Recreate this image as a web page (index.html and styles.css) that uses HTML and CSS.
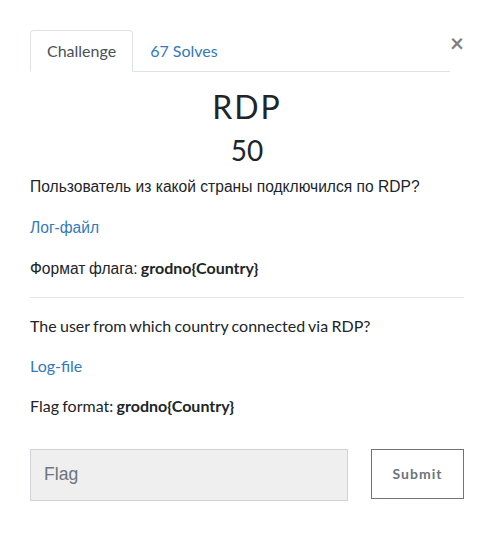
FILE: index.html
```html
<!DOCTYPE html>
<html lang="ru">
<head>
<meta charset="utf-8">
<title>RDP</title>
<link rel="stylesheet" href="styles.css">
</head>
<body>
<div class="modal">
  <div class="header">
    <ul class="nav">
      <li class="tab active">Challenge</li>
      <li class="tab">67 Solves</li>
    </ul>
    <span class="close">×</span>
  </div>
  <h2 class="name">RDP</h2>
  <h3 class="value">50</h3>
  <div class="desc">
    <p class="ru">Пользователь из какой страны подключился по RDP?</p>
    <p><a class="link ru" href="#">Лог-файл</a></p>
    <p><span class="ru">Формат флага:</span> <strong>grodno{Country}</strong></p>
    <hr class="rule">
    <p>The user from which country connected via RDP?</p>
    <p><a class="link" href="#">Log-file</a></p>
    <p>Flag format: <strong>grodno{Country}</strong></p>
  </div>
  <form class="submit-row">
    <input class="flag" type="text" placeholder="Flag">
    <button class="submit" type="button">Submit</button>
  </form>
</div>
</body>
</html>
```
FILE: styles.css
```css
html, body {
  margin: 0;
  padding: 0;
  background: #fff;
}
body {
  font-family: Lato, "Liberation Sans", sans-serif;
  font-size: 16px;
  line-height: 1.5;
  color: #212529;
}
.modal {
  padding: 30px 32px 0 30px;
}
.header {
  display: flex;
  align-items: flex-start;
}
.nav {
  flex: 1;
  display: flex;
  list-style: none;
  margin: 0;
  padding: 0;
  border-bottom: 1px solid #dee2e6;
}
.tab {
  padding: 8px 16px;
  border: 1px solid transparent;
  border-top-left-radius: 4px;
  border-top-right-radius: 4px;
  margin-bottom: -1px;
  color: #337ab7;
  line-height: 24px;
}
.tab.active {
  color: #495057;
  border-color: #dee2e6 #dee2e6 #fff;
  background: #fff;
}
.close {
  width: 14px;
  font-size: 24px;
  font-weight: 700;
  line-height: 1;
  color: #000;
  opacity: 0.5;
  text-align: right;
  margin-top: 1px;
}
.name {
  margin: 16px 0 8px;
  text-align: center;
  font-size: 32px;
  font-weight: 400;
  line-height: 1.2;
  letter-spacing: 2px;
}
.value {
  margin: 0 0 7px;
  text-align: center;
  font-size: 28px;
  font-weight: 400;
  line-height: 1.2;
}
.desc p {
  margin: 0 0 16px;
  line-height: 24px;
  word-spacing: -0.8px;
}
.desc p.ru {
  word-spacing: 0;
}
.ru {
  font-family: "Liberation Sans", Arial, sans-serif;
  font-size: 15.6px;
}
.link {
  color: #337ab7;
  text-decoration: none;
}
strong {
  font-weight: 700;
}
.rule {
  margin: 16px 0;
  border: 0;
  border-top: 1px solid rgba(0, 0, 0, 0.1);
}
.submit-row {
  display: flex;
  justify-content: space-between;
  align-items: flex-start;
  margin-top: 31px;
}
.flag {
  box-sizing: border-box;
  width: 318px;
  height: 52px;
  padding: 0 13px;
  background: #efefef;
  border: 1px solid #cfd3d9;
  border-radius: 0;
  font-family: "Liberation Sans", Arial, sans-serif;
  font-size: 17.6px;
  color: #495057;
  outline: none;
}
.flag::placeholder {
  color: #6c757d;
}
.submit {
  box-sizing: border-box;
  width: 93px;
  height: 50px;
  background: #fff;
  border: 1px solid #6c757d;
  border-radius: 0;
  font-family: Lato, sans-serif;
  font-size: 14px;
  font-weight: 700;
  letter-spacing: 1px;
  color: #6c757d;
  padding: 0;
}
```
